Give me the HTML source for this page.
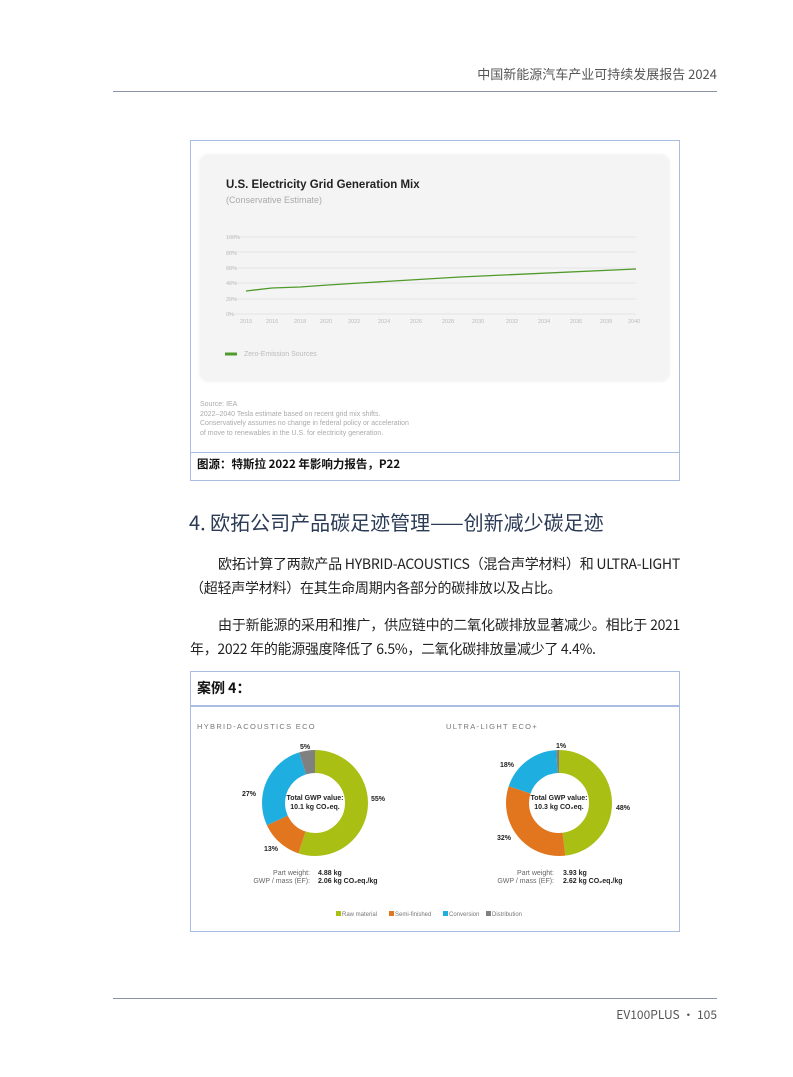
<!DOCTYPE html>
<html><head><meta charset="utf-8"><style>
body{margin:0;background:#fff;width:793px;height:1077px;position:relative;overflow:hidden;font-family:"Noto Sans CJK SC","Liberation Sans",sans-serif;color:#222}
.a{position:absolute}
p{margin:0}
.l{font-family:"Liberation Sans",sans-serif}
.n{white-space:nowrap}
</style></head><body>
<div class="a" style="right:76px;top:64px;font-size:13px;color:#555;">中国新能源汽车产业可持续发展报告 2024</div>
<div class="a" style="left:113px;top:91px;width:604px;height:1px;background:#8a94a8"></div>

<div class="a" style="left:190px;top:140px;width:488px;height:339px;border:1px solid #a9bde0;"></div>
<div class="a" style="left:200px;top:155px;width:469px;height:226px;background:#f4f4f4;border-radius:8px;box-shadow:0 0 4px #eee"></div>
<div class="a l" style="left:226px;top:179px;font-size:11.5px;font-weight:bold;color:#222">U.S. Electricity Grid Generation Mix</div>
<div class="a l" style="left:226px;top:195px;font-size:9px;color:#aaa">(Conservative Estimate)</div>
<svg class="a" style="left:200px;top:225px" width="469" height="140">
<g stroke="#e4e4e4" stroke-width="1">
<line x1="28" y1="12" x2="436" y2="12"/><line x1="28" y1="27" x2="436" y2="27"/><line x1="28" y1="43" x2="436" y2="43"/><line x1="28" y1="58" x2="436" y2="58"/><line x1="28" y1="74" x2="436" y2="74"/><line x1="28" y1="89" x2="436" y2="89"/></g>
<g font-size="5.5" fill="#bbb" font-family="Liberation Sans">
<text x="26" y="14">100%</text><text x="26" y="30">80%</text><text x="26" y="45">60%</text><text x="26" y="60">40%</text><text x="26" y="76">20%</text><text x="26" y="91">0%</text>
<text x="40" y="98">2015</text><text x="66" y="98">2016</text><text x="94" y="98">2018</text><text x="120" y="98">2020</text><text x="148" y="98">2022</text><text x="178" y="98">2024</text><text x="210" y="98">2026</text><text x="242" y="98">2028</text><text x="272" y="98">2030</text><text x="306" y="98">2032</text><text x="338" y="98">2034</text><text x="370" y="98">2036</text><text x="400" y="98">2038</text><text x="428" y="98">2040</text></g>
<polyline points="46,66 72,63 100,62 128,60 160,58 260,52 436,44" fill="none" stroke="#4f9a2a" stroke-width="1.3"/>
<line x1="25" y1="129" x2="37" y2="129" stroke="#4f9a2a" stroke-width="3"/>
<text x="44" y="131" font-size="7" fill="#bbb" font-family="Liberation Sans">Zero-Emission Sources</text>
</svg>
<div class="a l" style="left:200px;top:400px;font-size:7px;line-height:9.6px;color:#aaa">Source: IEA<br>2022–2040 Tesla estimate based on recent grid mix shifts.<br>Conservatively assumes no change in federal policy or acceleration<br>of move to renewables in the U.S. for electricity generation.</div>
<div class="a" style="left:190px;top:452px;width:489px;height:1px;background:#a9bde0"></div>
<div class="a" style="left:197px;top:456px;font-size:11.5px;font-weight:bold;color:#111">图源：特斯拉 2022 年影响力报告，P22</div>

<div class="a" style="left:189px;top:507px;font-size:20px;color:#2b3a55">4. 欧拓公司产品碳足迹管理——创新减少碳足迹</div>
<div class="a" style="left:190px;top:552px;width:490px;font-size:14px;line-height:24px;color:#222;text-align:justify">
<p style="text-indent:28px;letter-spacing:-0.25px">欧拓计算了两款产品 HYBRID-ACOUSTICS（混合声学材料）和 <span class="n">ULTRA-LIGHT</span>（超轻声学材料）在其生命周期内各部分的碳排放以及占比。</p>
<p style="text-indent:28px;margin-top:13px;letter-spacing:-0.3px">由于新能源的采用和推广，供应链中的二氧化碳排放显著减少。<span class="n">相比于 2021</span> 年，2022 年的能源强度降低了 6.5%，二氧化碳排放量减少了 4.4%.</p></div>

<div class="a" style="left:190px;top:671px;width:488px;height:259px;border:1px solid #a9bde0;"></div>
<div class="a" style="left:190px;top:705px;width:490px;height:2px;background:#a9bde0"></div>
<div class="a" style="left:197px;top:678px;font-size:14px;font-weight:bold;color:#111">案例 4：</div>
<div class="a l" style="left:197px;top:722px;font-size:7.5px;letter-spacing:1.3px;color:#777">HYBRID-ACOUSTICS ECO</div>
<div class="a l" style="left:446px;top:722px;font-size:7.5px;letter-spacing:1.3px;color:#777">ULTRA-LIGHT ECO+</div>
<svg class="a" style="left:190px;top:707px" width="490" height="222" font-family="Liberation Sans" font-size="7" font-weight="bold" fill="#222">
<g transform="translate(125,96) rotate(-90)" fill="none" stroke-width="23">
<circle r="41.5" stroke="#a9bf14" stroke-dasharray="143.4 260.75"/>
<circle r="41.5" stroke="#e2761e" stroke-dasharray="33.9 260.75" stroke-dashoffset="-143.4"/>
<circle r="41.5" stroke="#1eaee0" stroke-dasharray="70.4 260.75" stroke-dashoffset="-177.3"/>
<circle r="41.5" stroke="#808080" stroke-dasharray="13.05 260.75" stroke-dashoffset="-247.7"/></g>
<g transform="translate(369,96) rotate(-90)" fill="none" stroke-width="23">
<circle r="41.5" stroke="#a9bf14" stroke-dasharray="125.2 260.75"/>
<circle r="41.5" stroke="#e2761e" stroke-dasharray="83.4 260.75" stroke-dashoffset="-125.2"/>
<circle r="41.5" stroke="#1eaee0" stroke-dasharray="49.5 260.75" stroke-dashoffset="-208.6"/>
<circle r="41.5" stroke="#808080" stroke-dasharray="2.6 260.75" stroke-dashoffset="-258.1"/></g>
<text x="125" y="93" text-anchor="middle">Total GWP value:</text><text x="125" y="102" text-anchor="middle">10.1 kg CO₂eq.</text>
<text x="369" y="93" text-anchor="middle">Total GWP value:</text><text x="369" y="102" text-anchor="middle">10.3 kg CO₂eq.</text>
<text x="110" y="42">5%</text><text x="181" y="94">55%</text><text x="52" y="89">27%</text><text x="74" y="144">13%</text>
<text x="366" y="41">1%</text><text x="310" y="60">18%</text><text x="426" y="103">48%</text><text x="307" y="133">32%</text>
<g font-weight="normal" fill="#666"><text x="120" y="168" text-anchor="end">Part weight:</text><text x="120" y="176" text-anchor="end">GWP / mass (EF):</text>
<text x="364" y="168" text-anchor="end">Part weight:</text><text x="364" y="176" text-anchor="end">GWP / mass (EF):</text></g>
<text x="128" y="168">4.88 kg</text><text x="128" y="176">2.06 kg CO₂eq./kg</text>
<text x="373" y="168">3.93 kg</text><text x="373" y="176">2.62 kg CO₂eq./kg</text>
<g font-weight="normal" font-size="6" fill="#777">
<rect x="146" y="204" width="5" height="5" fill="#a9bf14"/><text x="152" y="209">Raw material</text>
<rect x="199" y="204" width="5" height="5" fill="#e2761e"/><text x="205" y="209">Semi-finished</text>
<rect x="253" y="204" width="5" height="5" fill="#1eaee0"/><text x="259" y="209">Conversion</text>
<rect x="296" y="204" width="5" height="5" fill="#808080"/><text x="302" y="209">Distribution</text></g>
</svg>

<div class="a" style="left:113px;top:998px;width:604px;height:1px;background:#8a94a8"></div>
<div class="a" style="right:76px;top:1006px;font-size:12px;color:#555">EV100PLUS · 105</div>
</body></html>
